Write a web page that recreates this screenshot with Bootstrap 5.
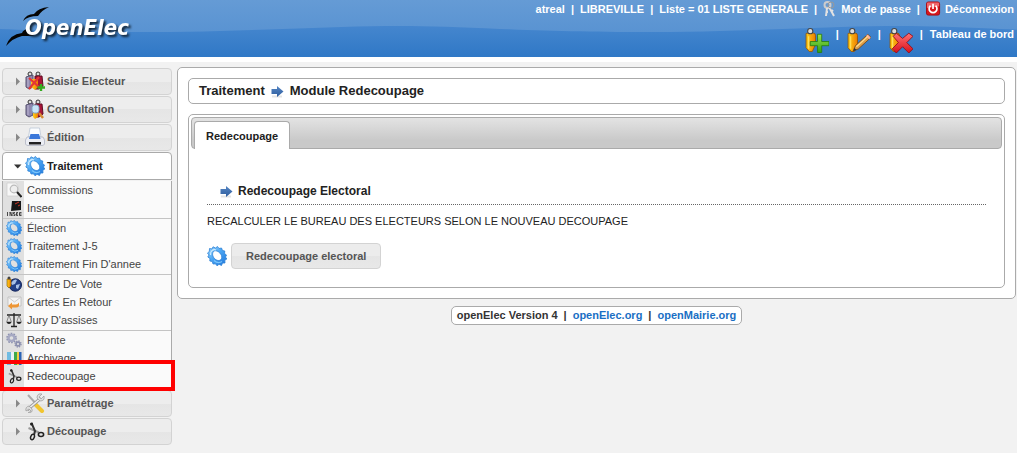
<!DOCTYPE html>
<html lang="fr">
<head>
<meta charset="utf-8">
<meta name="viewport" content="width=device-width, initial-scale=1">
<title>openElec - Module Redecoupage</title>
<link rel="stylesheet" href="https://cdn.jsdelivr.net/npm/bootstrap@5.3.0/dist/css/bootstrap.min.css">
<style>
body{font-family:"Liberation Sans",Arial,sans-serif;font-size:11px;line-height:16px;color:#222;background:#f2f2f2}
a{text-decoration:none}
svg{flex:none;display:block}
.topbar{height:62px;padding-right:3px;border-bottom:5px solid #fff;
  background:url("data:image/svg+xml,%3Csvg xmlns='http://www.w3.org/2000/svg' width='500' height='57'%3E%3Cdefs%3E%3ClinearGradient id='a' x2='0' y2='1'%3E%3Cstop stop-color='%23659bd5'/%3E%3Cstop offset='1' stop-color='%235993d2'/%3E%3C/linearGradient%3E%3C/defs%3E%3Cpath fill='url(%23a)' d='M0 0H500V29C460 27 430 26 400 26C320 26 250 32 150 32C90 32 50 31 0 29Z'/%3E%3C/svg%3E") repeat-x,linear-gradient(#4586ce 26px,#2f78c6 57px)}
.topbar a,.topbar span{color:#fff;font-weight:700}
.toplinks{gap:6px;height:17px}
.shortcuts{gap:7px;margin-top:9px}
.shortcuts svg{margin-top:2px}
.brand-name{fill:#fff;font:italic 700 22px "DejaVu Sans Condensed","DejaVu Sans",sans-serif;filter:drop-shadow(2px 2px 1px #123)}
.page{padding:5px 1px 0 2px;gap:5px}
.sidebar{width:170px;padding-top:1px}
.menu-head{height:27px;margin-bottom:1px;padding:0 0 1px 10px;border:1px solid #d3d3d3;border-radius:4px;background:linear-gradient(#ededed 50%,#e5e5e5 50%,#e8e8e8);color:#555;font-weight:700}
.menu-head.open{height:28px;border-color:#aaa;background:#fff;color:#212121;border-radius:4px 4px 0 0}
.menu-head svg:first-child{width:9px;margin-right:3px}
.menu-head svg + svg{margin-right:2px}
.submenu{padding-bottom:4px;border:solid #aaa;border-width:0 1px;background:linear-gradient(90deg,#e0e0e0 21px,#fafafa 21px)}
.submenu ul{padding-bottom:1px}
.submenu ul + ul{border-top:1px solid #c4c4c4}
.submenu a{height:18px;gap:5px;padding-left:3px;color:#444}
.submenu .marked::after{content:"";position:absolute;z-index:2;inset:-7px -4px -6px -3px;border:4px solid #f00}
.panel{border:1px solid #aaa;border-radius:5px;background:#fff}
.outer{padding:10px}
.crumb{height:26px;padding:0 10px;gap:6px;font-size:13px;font-weight:700;margin-bottom:10px}
.tabbox{padding:2px}
.tabstrip{height:32px;padding:3px 2px 0;border:1px solid #aaa;border-radius:4px;background:linear-gradient(#e3e3e3,#c9c9c9 75%)}
.tabstrip a{height:28px;padding:0 11px;background:#fff;border:1px solid #aaa;border-bottom:0;border-radius:4px 4px 0 0;color:#212121;font-weight:700}
.tabbody{padding:31px 16px 16px}
.tabbody h2{font-size:12px;line-height:22px;font-weight:700;margin:0 0 8px;padding:0 0 2px 13px;gap:5px;border-bottom:1px dotted #666}
.tabbody p{margin:0 0 14px}
.action{font-size:11px;font-weight:700;color:#555;height:26px;line-height:16px;padding:3px 14px;border:1px solid #d3d3d3;border-radius:4px;background:linear-gradient(#ececec 50%,#e5e5e5 50%,#e8e8e8)}
.foot{margin-top:7px;padding:0 5px;height:19px;line-height:17px;font-weight:700;color:#333;gap:6px}
.foot a{color:#1a6fc4}
</style>
</head>
<body>
<svg width="0" height="0" class="position-absolute" aria-hidden="true">
<defs>
<linearGradient id="gb" x2="1" y2="1"><stop stop-color="#a5dcfd"/><stop offset=".45" stop-color="#4ba6f4"/><stop offset="1" stop-color="#1c74da"/></linearGradient>
<linearGradient id="go" x2="1"><stop stop-color="#ffd21c"/><stop offset="1" stop-color="#ee7d00"/></linearGradient>
<linearGradient id="gg" x2="0" y2="1"><stop stop-color="#9be352"/><stop offset="1" stop-color="#2ea313"/></linearGradient>
<linearGradient id="gr" x2="0" y2="1"><stop stop-color="#ff7272"/><stop offset="1" stop-color="#d80f1c"/></linearGradient>
<linearGradient id="ga" x2="0" y2="1"><stop stop-color="#5586c4"/><stop offset="1" stop-color="#2f5d9d"/></linearGradient>
</defs>
<symbol id="right" viewBox="0 0 9 12"><path d="M3 2.500L7 6.500L3 10.500Z" fill="#888"/></symbol>
<symbol id="down" viewBox="0 0 9 12"><path d="M1 4.500H8.500L4.700 8.500Z" fill="#333"/></symbol>
<symbol id="arrow" viewBox="0 0 13 13"><path d="M1 11.500H11" stroke="#e4e4e4" stroke-width="2"/><path d="M.5 4H6V1L12.500 6.500L6 12V9H.5Z" fill="url(#ga)"/></symbol>
<symbol id="gear" viewBox="0 0 20 20"><path fill-rule="evenodd" d="M2.500 2.500L5 3L6 .8L8.500 2L10.500 .5L12 2.500L14.500 2L15.500 4.500L17.800 5L17.500 7.500L19.500 9L18.500 11L19.800 13L17.800 14.300L18 17L15.500 17L14.500 19.500L12 18.300L10 19.800L8.500 17.800L6 18L5.300 15.500L2.800 15L3 12.500L.8 11L2 9L.5 7L2.300 5.500ZM6.500 5.500C4.500 8 6 12 9 13.800C12 15.500 15 14 14.800 11C14.500 7 9 3 6.500 5.500Z" fill="url(#gb)" stroke="#2b80d6" stroke-width=".8"/><path d="M3.500 9C3 5 6 3 9 4" fill="none" stroke="#d0edff" stroke-width="1.200"/><path d="M7 14.500Q11 18 15 15.500" fill="none" stroke="#7cc6fa" stroke-width="1.200"/></symbol>
<symbol id="person" viewBox="0 0 24 24"><path d="M2 6Q1.500 5 3 5H9Q11 5 11 7V16L8 22.500H5L2 19Z" fill="url(#go)" stroke="#985400" stroke-width=".8"/><path d="M4.500 8V20" stroke="#ffe66a" stroke-width="1"/><circle cx="6" cy="3" r="2.500" fill="#ddd" stroke="#444"/></symbol>
<symbol id="plus" viewBox="0 0 24 24"><use href="#person" width="24" height="24"/><path d="M13 6H17V13H24V17H17V23.500H13V17H6V13H13Z" fill="url(#gg)" stroke="#277c10" stroke-width=".8"/></symbol>
<symbol id="edit" viewBox="0 0 24 24"><use href="#person" width="24" height="24"/><path d="M7 22L9 17L21 6L24 9L12 20Z" fill="#e0a04a" stroke="#6e4518" stroke-width=".8"/><path d="M7 22L8 19L10 21Z" fill="#333"/><path d="M20 7L23 10" stroke="#ffb0a0" stroke-width="2"/><path d="M10 18L21 8" stroke="#ffe092"/></symbol>
<symbol id="del" viewBox="0 0 24 24"><use href="#person" width="24" height="24"/><path d="M8 5L14 10L20 5L24 8L18 14L24 20L20 24L14 18L8 24L4 20L10 14L5 8Z" fill="url(#gr)" stroke="#8d0b16" stroke-width=".8"/></symbol>
<symbol id="keys" viewBox="0 0 14 16"><circle cx="4.500" cy="4" r="3" fill="none" stroke="#ccc" stroke-width="2"/><path d="M4 7L3 15M3 11H5M6 6L11 15M8 11L10 9" stroke="#e2e2e2" stroke-width="2"/><circle cx="8" cy="4" r="3" fill="none" stroke="#999" stroke-width="1"/></symbol>
<symbol id="power" viewBox="0 0 16 16"><rect x=".5" y=".5" width="14" height="14" rx="2" fill="#d8161c" stroke="#a30a10"/><path d="M1 7V2Q1 1 2 1H13Q14 1 14 2V5Z" fill="#f0656a"/><path d="M4.800 4.500A4.200 4.200 0 1 0 10.200 4.500M7.500 2.500V8" fill="none" stroke="#fff" stroke-width="1.800"/></symbol>
<symbol id="folk" viewBox="0 0 20 20"><circle cx="5" cy="3" r="2" fill="#ddd" stroke="#333"/><circle cx="13" cy="3" r="2" fill="#ddd" stroke="#333"/><path d="M1 6L8 4V16L4 18L1 16Z" fill="#8f87ad" stroke="#55506e"/><path d="M3 6V16" stroke="#bcb6d2"/><path d="M10 5H17L18 15L14 18H10Z" fill="#a91438" stroke="#5e0c22"/></symbol>
<symbol id="saisie" viewBox="0 0 20 20"><use href="#folk" width="20" height="20"/><path d="M6 8H13V16L10 19L6 16Z" fill="url(#go)"/><path d="M4 7L15 17M14 6L4 18" stroke="#e43635" stroke-width="2.200"/><path d="M16 13V20M12.500 16.500H20" stroke="#35ab1f" stroke-width="2.400"/></symbol>
<symbol id="consult" viewBox="0 0 20 20"><use href="#folk" width="20" height="20"/><path d="M8 13H13V18L10 20L8 18Z" fill="url(#go)"/><rect x="7" y="6" width="7" height="8" rx="2.500" fill="#c8e6f8" stroke="#83a5c0"/><path d="M14 14L18 19" stroke="#d68b32" stroke-width="2.400"/></symbol>
<symbol id="print" viewBox="0 0 20 20"><path d="M5 1H14.500L16 10H3.500Z" fill="#fbfdff" stroke="#bbc6d6" stroke-width=".8"/><path d="M2 10L.5 13V17Q1 18.500 3 18.500H17Q19 18.500 19.500 17V13L18 10Z" fill="#eceef4" stroke="#b1b5c3" stroke-width=".8"/><path d="M5.500 7H14L15.500 12H4Z" fill="#3b78da"/><path d="M4 15H16V17.500H4Z" fill="#222"/></symbol>
<symbol id="tools" viewBox="0 0 20 20"><path d="M3 2L14 14" stroke="#aaa" stroke-width="2"/><path d="M11 12L17 18" stroke="#f1c52f" stroke-width="4" stroke-linecap="round"/><path d="M2 17L16 5" stroke="#9a9a9a" stroke-width="3.200"/><path d="M2 17L16 5" stroke="#eee" stroke-width="1.600"/><path d="M19 3L16 6L14 4L17 1Q12 0 12 5L15 8Q20 8 19 3M1 18L4 16L6 18L3 20Q8 20 7 16L4 13Q0 14 1 18" fill="#ddd" stroke="#999" stroke-width=".7"/></symbol>
<symbol id="cut" viewBox="0 0 20 20"><path d="M3.500 7L14 11.500" stroke="#9a9a9a" stroke-width="2"/><path d="M6.500 2L10 10L9 14" fill="none" stroke="#333" stroke-width="2"/><circle cx="6.500" cy="3" r="1.500" fill="#222"/><ellipse cx="7.500" cy="16" rx="1.800" ry="2.800" fill="none" stroke="#222" stroke-width="1.500" transform="rotate(20 7.500 16)"/><ellipse cx="16" cy="13.500" rx="2.600" ry="2" fill="none" stroke="#222" stroke-width="1.600"/></symbol>
<symbol id="search" viewBox="0 0 16 16"><path d="M1 1H10L12 4V14H1Z" fill="#f7f7f7" stroke="#ccc" stroke-width=".7"/><circle cx="8" cy="7" r="3.800" fill="#eee" stroke="#bbb" stroke-width="1.200"/><path d="M11 10L15.500 15" stroke="#222" stroke-width="2"/></symbol>
<symbol id="insee" viewBox="0 0 16 16"><path d="M6 1H15V10L5 11Z" fill="#171717"/><path d="M9 4L13 2M12 6L14 5" stroke="#c32" stroke-width="1"/><path d="M1.500 12V16M4 16V12L6 16V12M9 12.500H7.500V14H9V15.500H7.500M12 12.500H10.500V15.500H12M10.500 14H12M15.500 12.500H13.500V15.500H15.500M13.500 14H15.500" fill="none" stroke="#222" stroke-width=".8"/></symbol>
<symbol id="globe" viewBox="0 0 16 16"><circle cx="9.300" cy="9" r="6.200" fill="#233f86" stroke="#15265b"/><path d="M5 7Q8 2 11 4L9 8L6 9ZM10 9L14 8L12 13L10 12Z" fill="#a9c1e7"/><path d="M1 3H5V10L3 12L1 10Z" fill="url(#go)" stroke="#7b5205" stroke-width=".6"/><circle cx="3" cy="2" r="1.500" fill="#444"/></symbol>
<symbol id="mail" viewBox="0 0 16 16"><path d="M2 3H15V12H2Z" fill="#f4f4f4" stroke="#bbb" stroke-width=".8"/><path d="M2 3L8.500 8L15 3" fill="none" stroke="#ccc"/><path d="M2 12L6 8.500V10.500H10Q12 10.500 13 8.500V12Q12 13.500 10 13.500H6V15.500Z" fill="#ee9635"/></symbol>
<symbol id="scale" viewBox="0 0 16 16"><path d="M8 1V14M1 3H15M5 14.500H11" stroke="#222" stroke-width="1.300"/><path d="M3 3L.7 10H5.300ZM13 3L10.700 10H15.300Z" fill="none" stroke="#666" stroke-width=".7"/><path d="M.5 10H5.500Q5 12 3 12T.5 10M10.500 10H15.500Q15 12 13 12T10.500 10" fill="#222"/></symbol>
<symbol id="gears" viewBox="0 0 16 16"><g fill="none" stroke="#8d91af"><circle cx="5.500" cy="6" r="4.500" stroke-width="1.600" stroke-dasharray="1.700 1.127"/><circle cx="5.500" cy="6" r="3" stroke-width="2.400" stroke="#a6a9c3"/><circle cx="12" cy="12" r="3" stroke-width="1.400" stroke-dasharray="1.300 1.056"/><circle cx="12" cy="12" r="1.900" stroke-width="1.600"/></g></symbol>
<symbol id="books" viewBox="0 0 16 16"><path d="M1 2H5V15H1Z" fill="#6fbbe2"/><path d="M5 2H8V15H5Z" fill="#e8f2f5"/><path d="M8 2H11V15H8Z" fill="#3fa94c"/><path d="M11 2H13V15H11Z" fill="#f3cb43"/><path d="M13 2H15.500V15H13Z" fill="#2a63b5"/></symbol>
</svg>

<header class="topbar d-flex justify-content-between align-items-start">
  <a href="#" aria-label="OpenElec"><svg width="140" height="57" viewBox="0 0 140 57"><path d="M6 46Q10 34 22 33Q23 30 29 28L28 32L34 36Q26 36 22 36Q13 38 6 46ZM23 21Q26 14 34 14Q38 8 49 7Q42 10 38 16Q28 16 23 21Z" fill="#050505"/><text class="brand-name" x="25" y="35">OpenElec</text></svg></a>
  <div class="d-flex flex-column align-items-end">
    <nav class="toplinks d-flex align-items-center" aria-label="Session">
      <span>atreal</span><span>|</span><span>LIBREVILLE</span><span>|</span><span>Liste = 01 LISTE GENERALE</span><span>|</span>
      <a href="#" class="d-flex align-items-center gap-1"><svg width="14" height="16"><use href="#keys"/></svg>Mot de passe</a><span>|</span>
      <a href="#" class="d-flex align-items-center gap-1"><svg width="15" height="16"><use href="#power"/></svg>Déconnexion</a>
    </nav>
    <nav class="shortcuts d-flex align-items-start" aria-label="Raccourcis">
      <a href="#" aria-label="Ajouter un électeur"><svg width="25" height="25"><use href="#plus"/></svg></a><span>|</span>
      <a href="#" aria-label="Modifier un électeur"><svg width="25" height="25"><use href="#edit"/></svg></a><span>|</span>
      <a href="#" aria-label="Radier un électeur"><svg width="25" height="25"><use href="#del"/></svg></a><span>|</span>
      <a href="#">Tableau de bord</a>
    </nav>
  </div>
</header>

<div class="page d-flex align-items-start">
  <nav class="sidebar flex-shrink-0" aria-label="Menu">
    <a href="#" class="menu-head d-flex align-items-center"><svg height="12"><use href="#right"/></svg><svg width="20" height="20"><use href="#saisie"/></svg>Saisie Electeur</a>
    <a href="#" class="menu-head d-flex align-items-center"><svg height="12"><use href="#right"/></svg><svg width="20" height="20"><use href="#consult"/></svg>Consultation</a>
    <a href="#" class="menu-head d-flex align-items-center"><svg height="12"><use href="#right"/></svg><svg width="20" height="20"><use href="#print"/></svg>Édition</a>
    <a href="#" class="menu-head open d-flex align-items-center"><svg height="12"><use href="#down"/></svg><svg width="20" height="20"><use href="#gear"/></svg>Traitement</a>
    <div class="submenu">
      <ul class="list-unstyled m-0">
        <li><a href="#" class="d-flex align-items-center"><svg width="16" height="16"><use href="#search"/></svg>Commissions</a></li>
        <li><a href="#" class="d-flex align-items-center"><svg width="16" height="16"><use href="#insee"/></svg>Insee</a></li>
      </ul>
      <ul class="list-unstyled m-0">
        <li><a href="#" class="d-flex align-items-center"><svg width="16" height="16"><use href="#gear"/></svg>Élection</a></li>
        <li><a href="#" class="d-flex align-items-center"><svg width="16" height="16"><use href="#gear"/></svg>Traitement J-5</a></li>
        <li><a href="#" class="d-flex align-items-center"><svg width="16" height="16"><use href="#gear"/></svg>Traitement Fin D'annee</a></li>
      </ul>
      <ul class="list-unstyled m-0">
        <li><a href="#" class="d-flex align-items-center"><svg width="16" height="16"><use href="#globe"/></svg>Centre De Vote</a></li>
        <li><a href="#" class="d-flex align-items-center"><svg width="16" height="16"><use href="#mail"/></svg>Cartes En Retour</a></li>
        <li><a href="#" class="d-flex align-items-center"><svg width="16" height="16"><use href="#scale"/></svg>Jury D'assises</a></li>
      </ul>
      <ul class="list-unstyled m-0">
        <li><a href="#" class="d-flex align-items-center"><svg width="16" height="16"><use href="#gears"/></svg>Refonte</a></li>
        <li><a href="#" class="d-flex align-items-center"><svg width="16" height="16"><use href="#books"/></svg>Archivage</a></li>
        <li class="marked position-relative"><a href="#" class="d-flex align-items-center"><svg width="16" height="16"><use href="#cut"/></svg>Redecoupage</a></li>
      </ul>
    </div>
    <a href="#" class="menu-head d-flex align-items-center"><svg height="12"><use href="#right"/></svg><svg width="20" height="20"><use href="#tools"/></svg>Paramétrage</a>
    <a href="#" class="menu-head d-flex align-items-center"><svg height="12"><use href="#right"/></svg><svg width="20" height="20"><use href="#cut"/></svg>Découpage</a>
  </nav>

  <div class="flex-grow-1 d-flex flex-column">
    <main class="panel outer">
      <h1 class="panel crumb d-flex align-items-center">Traitement <svg width="13" height="13"><use href="#arrow"/></svg> Module Redecoupage</h1>
      <div class="panel tabbox">
        <div class="tabstrip d-flex"><a href="#redecoupage" class="d-flex align-items-center">Redecoupage</a></div>
        <section id="redecoupage" class="tabbody">
          <h2 class="d-flex align-items-center"><svg width="13" height="13"><use href="#arrow"/></svg>Redecoupage Electoral</h2>
          <p>RECALCULER LE BUREAU DES ELECTEURS SELON LE NOUVEAU DECOUPAGE</p>
          <div class="d-flex align-items-center"><svg width="20" height="20" class="me-1"><use href="#gear"/></svg><button type="button" class="action">Redecoupage electoral</button></div>
        </section>
      </div>
    </main>
    <footer class="panel foot d-flex align-self-center"><span>openElec Version 4</span><span>|</span><a href="#">openElec.org</a><span>|</span><a href="#">openMairie.org</a></footer>
  </div>
</div>
<script src="https://cdn.jsdelivr.net/npm/bootstrap@5.3.0/dist/js/bootstrap.bundle.min.js"></script>
</body>
</html>
